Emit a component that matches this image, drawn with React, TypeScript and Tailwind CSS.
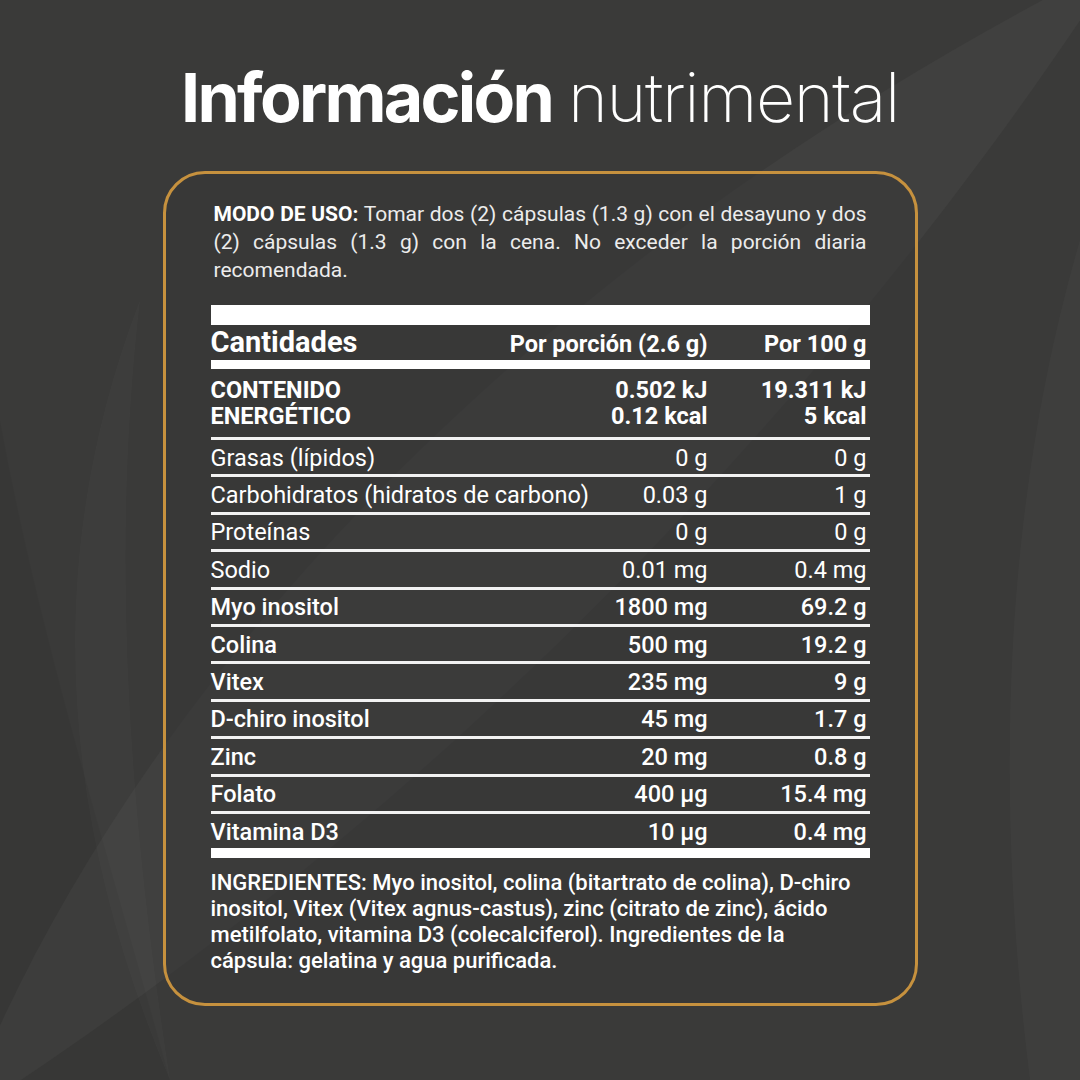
const rows = [
  { label: "Grasas (lípidos)", a: "0 g", b: "0 g", strong: false },
  { label: "Carbohidratos (hidratos de carbono)", a: "0.03 g", b: "1 g", strong: false },
  { label: "Proteínas", a: "0 g", b: "0 g", strong: false },
  { label: "Sodio", a: "0.01 mg", b: "0.4 mg", strong: false },
  { label: "Myo inositol", a: "1800 mg", b: "69.2 g", strong: true },
  { label: "Colina", a: "500 mg", b: "19.2 g", strong: true },
  { label: "Vitex", a: "235 mg", b: "9 g", strong: true },
  { label: "D-chiro inositol", a: "45 mg", b: "1.7 g", strong: true },
  { label: "Zinc", a: "20 mg", b: "0.8 g", strong: true },
  { label: "Folato", a: "400 µg", b: "15.4 mg", strong: true },
  { label: "Vitamina D3", a: "10 µg", b: "0.4 mg", strong: true },
];

function Backdrop() {
  return (
    <svg className="absolute inset-0 w-full h-full" viewBox="0 0 1080 1080" fill="none">
      {/* soft leaf shapes behind the card */}
      <path d="M-40 1120 C 120 700, 520 260, 1120 -40 C 900 300, 520 760, -40 1120 Z" fill="#ffffff" fillOpacity="0.03" />
      <path d="M170 1080 C 60 820, 40 560, 140 300 C 110 560, 130 820, 170 1080 Z" fill="#ffffff" fillOpacity="0.02" />
      <path d="M0 420 C 40 640, 110 860, 170 1080 L 0 1080 Z" fill="#000000" fillOpacity="0.035" />
      <path d="M1080 240 C 1010 480, 990 760, 1030 1080 L 1080 1080 Z" fill="#ffffff" fillOpacity="0.025" />
    </svg>
  );
}

export default function App() {
  return (
    <div
      className="relative w-[1080px] h-[1080px] overflow-hidden bg-[#3a3a39] text-white"
      style={{ fontFamily: "Roboto, 'Liberation Sans', sans-serif" }}
    >
      <Backdrop />

      <div className="relative flex flex-col items-center pt-[63px]">
        <h1
          className="text-[68px] leading-none whitespace-nowrap"
          style={{ fontFamily: "Inter, 'Liberation Sans', sans-serif" }}
        >
          <span className="font-bold tracking-[-0.04em]">Información</span>
          <span className="ml-[16px] font-extralight tracking-[-0.02em]">nutrimental</span>
        </h1>

        {/* Label card */}
        <div className="mt-[40px] w-[755px] h-[835px] rounded-[42px] border-[3px] border-[#c6913e] bg-[#363635]/50 px-[45px] pt-[26px]">
          <p className="px-[3px] text-[21px] leading-[28px] text-[#ececec] text-justify">
            <span className="font-bold text-white">MODO DE USO:</span> Tomar dos (2) cápsulas (1.3 g) con el desayuno y
            dos (2) cápsulas (1.3 g) con la cena. No exceder la porción diaria recomendada.
          </p>

          <div className="mt-[21px]">
            <div className="h-[20px] bg-white" />

            {/* header */}
            <div className="flex items-end h-[35px] pr-[3px] pb-[3px] font-bold">
              <span className="flex-1 text-[29px] leading-[30px]">Cantidades</span>
              <span className="text-[23.5px] leading-[26px] text-right">Por porción (2.6 g)</span>
              <span className="w-[159px] text-[23.5px] leading-[26px] text-right">Por 100 g</span>
            </div>
            <div className="h-[9px] bg-white" />

            {/* energy */}
            <div className="flex pt-[8px] pb-[8px] pr-[3px] border-b-[3px] border-[#f2f2f2] text-[23.5px] leading-[26px] font-bold">
              <span className="flex-1">
                CONTENIDO
                <br />
                ENERGÉTICO
              </span>
              <span className="text-right">
                0.502 kJ
                <br />
                0.12 kcal
              </span>
              <span className="w-[159px] text-right">
                19.311 kJ
                <br />5 kcal
              </span>
            </div>

            {rows.map((r, i) => (
              <div
                key={r.label}
                className={`flex items-center pr-[3px] pt-[1px] text-[23.5px] leading-[26px] ${
                  r.strong ? "font-medium" : "font-normal"
                } ${i === rows.length - 1 ? "h-[34.4px]" : "h-[37.4px] border-b-[3px] border-[#f2f2f2]"}`}
              >
                <span className="flex-1">{r.label}</span>
                <span className="text-right">{r.a}</span>
                <span className="w-[159px] text-right">{r.b}</span>
              </div>
            ))}
            <div className="h-[10px] bg-white" />
          </div>

          <p className="mt-[12px] text-[22px] leading-[26px] font-medium">
            INGREDIENTES: Myo inositol, colina (bitartrato de colina), D-chiro
            <br />
            inositol, Vitex (Vitex agnus-castus), zinc (citrato de zinc), ácido
            <br />
            metilfolato, vitamina D3 (colecalciferol). Ingredientes de la
            <br />
            cápsula: gelatina y agua purificada.
          </p>
        </div>
      </div>
    </div>
  );
}
